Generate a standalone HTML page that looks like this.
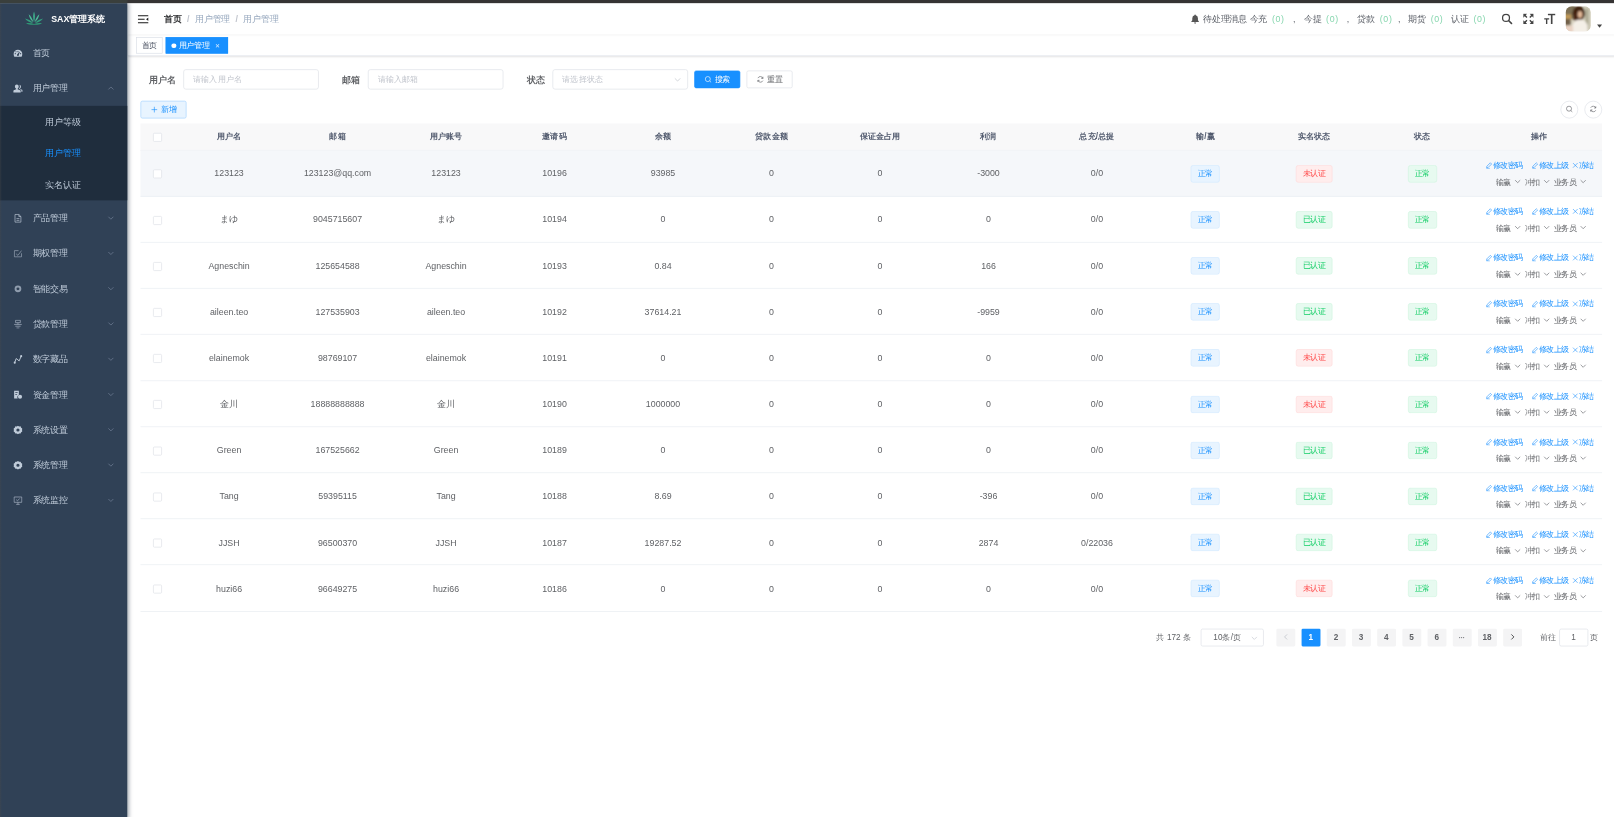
<!DOCTYPE html>
<html lang="zh">
<head>
<meta charset="utf-8">
<title>SAX管理系统</title>
<style>
*{box-sizing:border-box;margin:0;padding:0}
html,body{width:1614px;height:817px;overflow:hidden;background:#fff}
body{font-family:"Liberation Sans",sans-serif;font-size:14px;color:#606266;position:relative}
#root{position:absolute;left:0;top:0;width:2570px;height:1300px;transform:scale(0.63);transform-origin:0 0;overflow:hidden;background:#fff}
#strip{position:absolute;left:0;top:0;width:2570px;height:5px;background:linear-gradient(90deg,#3a3f3c 0,#3a3f3c 200px,#363434 204px,#363434 100%);z-index:50}
#ledge{position:absolute;left:0;top:5px;width:3px;height:1300px;background:linear-gradient(90deg,rgba(74,74,74,.38) 0,rgba(74,74,74,.18) 55%,rgba(74,74,74,0) 100%);z-index:49}
#app{position:absolute;left:2.5px;top:5px;width:2560px;height:1295px}
svg{display:inline-block;vertical-align:middle}
/* sidebar */
#side{position:absolute;left:-3px;top:0;width:202px;padding-left:2.300px;padding-top:.7px;height:100%;background:#304156;box-shadow:2px 0 6px rgba(0,21,41,.35);z-index:10}
.logo{height:50px;line-height:50px;text-align:center;white-space:nowrap;color:#fff;font-weight:700;font-size:14px}
.logo svg{width:34px;height:34px;margin-right:10px;margin-left:0;vertical-align:middle;position:relative;top:-1.500px}
.logo span{display:inline-block;vertical-align:middle;position:relative;top:-1.500px}
.mi{position:relative;height:56px;line-height:56px;padding-left:20px;color:#bfcbd9;font-size:14px;white-space:nowrap}
.mi svg.ic{width:15px;height:15px;margin-right:16px;margin-left:-1px;vertical-align:-3px;fill:currentColor}
.mi .arr{position:absolute;right:20px;top:50%;margin-top:-6px;width:12px;height:12px}
.sub{background:#1f2d3d;margin-left:-2.300px;padding-left:2.300px}
.sub .mi{height:50px;line-height:50px;padding-left:70px}
.sub .mi.on{color:#1890ff}
/* navbar */
#nav{position:absolute;left:200px;top:0;right:0;height:50px;background:#fff;box-shadow:0 1px 4px rgba(0,21,41,.08);z-index:5}
.ham{position:absolute;left:15px;top:15.500px;width:18.500px;height:19px}
.bc{position:absolute;left:58px;top:0;line-height:50px;font-size:14px;color:#97a8be;white-space:nowrap}
.bc b{color:#303133;font-weight:700}
.bc i{font-style:normal;font-weight:700;color:#c0c4cc;margin:0 8.500px}
.rm{position:absolute;right:0;top:0;height:50px;line-height:50px;white-space:nowrap}
.msg{position:absolute;top:0;height:50px;line-height:50px;font-size:14px;color:#5a5e66;white-space:nowrap}
.msg em{font-style:normal;color:#86d6ae;margin-left:7.500px;letter-spacing:1px}.msg i{display:inline-block;font-style:normal;text-align:center}
.nic{position:absolute;top:16px;width:18px;height:18px}
.ava{position:absolute;left:2282px;top:5px;width:40px;height:40px;border-radius:10px;overflow:hidden}
.caret{position:absolute;left:2332px;top:33.500px;width:0;height:0;border:4.5px solid transparent;border-top:5px solid #444;border-bottom:0}
/* tags */
#tags{position:absolute;left:200px;top:50px;right:0;height:34px;background:#fff;border-bottom:1px solid #dfe2e9;box-shadow:0 1px 3px 0 rgba(0,0,0,.10),0 0 3px 0 rgba(0,0,0,.04);z-index:4;white-space:nowrap;font-size:0}
.tag{display:inline-block;position:relative;height:26px;line-height:24px;border:1px solid #d8dce5;color:#495060;background:#fff;padding:0 8px;font-size:12px;margin-left:5px;margin-top:4px;vertical-align:top}
.tag:first-child{margin-left:13.500px}
.tag.on{background:#1890ff;color:#fff;border-color:#1890ff}
.tag.on:before{content:"";display:inline-block;width:7.500px;height:7.500px;border-radius:50%;background:#fff;margin-right:4.500px;position:relative;top:0}
.tag .x{display:inline-block;width:16px;text-align:center;font-size:10px;margin-left:4.500px;margin-right:.5px;color:#dcecff}
/* main */
#main{position:absolute;left:200px;top:85.100px;right:0;bottom:0;padding:20px;background:#fff}

.form{height:50px;white-space:nowrap;font-size:0}
.fi{display:inline-block;vertical-align:top;height:32px;line-height:32px;margin-right:10px;font-size:14px}
.fi label{display:inline-block;width:68px;text-align:right;padding-right:12px;font-weight:700;color:#606266;font-size:14px;vertical-align:top}
.inp{display:inline-block;vertical-align:top;width:215px;height:32px;line-height:30px;border:1px solid #dcdfe6;border-radius:4px;padding:0 15px;font-size:13px;color:#c0c4cc;background:#fff;position:relative}
.inp.sel svg{position:absolute;right:9px;top:9px;width:13px;height:13px}
.btn{display:inline-block;vertical-align:top;height:28px;line-height:26px;margin-top:2px;padding:0 15px;border:1px solid #dcdfe6;border-radius:3px;font-size:12px;color:#606266;background:#fff;margin-right:10px}
.btn.pri{background:#1890ff;border-color:#1890ff;color:#fff}
.btn.add{background:#e8f4ff;border-color:#a3d3ff;color:#1890ff;margin-top:0}
.bi{width:12px;height:12px;margin-right:5px;vertical-align:-1.5px}
.tb{position:relative;height:28px;margin-bottom:7.600px;font-size:0}
.cir{position:absolute;top:0;width:28px;height:28px;border:1px solid #dcdfe6;border-radius:50%;background:#fff;text-align:center;line-height:24px}
.cir svg{width:12px;height:12px}
.tbl{width:2320px;font-size:14px;color:#606266}
.tr{display:flex;height:73.200px;border-bottom:1px solid #e6ebf0;align-items:center}
.tr.hov{background:#f5f7fa}
.tr.th{height:43px;background:#f8f8f9;color:#515a6e;font-weight:700;font-size:13px}
.c{flex:1 1 0;text-align:center;white-space:nowrap;overflow:hidden;line-height:23px}
.c.ck{flex:0 0 55px}
.c.op{flex:0 0 198.500px}.tr .c{position:relative;top:.9px}.tr.th .c{top:.2px}
.cb{display:inline-block;width:14px;height:14px;border:1px solid #dcdfe6;border-radius:2px;background:#fff;vertical-align:middle}
.tg{display:inline-block;height:28px;line-height:26px;padding:0 10px;font-size:12px;border-radius:4px;border:1px solid}
.tg.b{background:#e8f4ff;border-color:#d1e9ff;color:#1890ff}
.tg.g{background:#e7faf0;border-color:#d0f5e0;color:#13ce66}
.tg.r{background:#ffeded;border-color:#ffdbdb;color:#ff4949}
.l1{height:26px;line-height:26px;font-size:0;color:#1890ff;white-space:nowrap;padding-left:2px}.l1 .tbn{font-size:12px}
.l1 .tbn{display:inline-block;margin-left:13.800px}.l1 .tbn:first-child{margin-left:0}.l1 .tbn:last-child{margin-left:5px}
.l1 .bi{margin-right:0;width:11px;height:11px}
.l2{height:26px;line-height:26px;font-size:0;color:#606266;white-space:nowrap;padding-left:7px}
.l2 span{display:inline-block;font-size:12px;margin-left:5.200px}.l2 span:first-child{margin-left:0}
.dn{width:12px;height:12px;margin-left:5px;vertical-align:-1.5px}
.pg{position:absolute;right:20px;top:906.100px;height:32px;padding:2px 5px;white-space:nowrap;font-size:0;color:#606266}
.pg>span{display:inline-block;vertical-align:top;height:28px;line-height:28px;font-size:13px}
.tot{margin-right:15px}
.psz{width:100px;border:1px solid #dcdfe6;border-radius:3px;line-height:26px!important;text-align:center;padding-right:15px;margin-right:15px;position:relative;color:#606266}
.psz svg{position:absolute;right:8px;top:8px;width:12px;height:12px}
.pb{min-width:30px;margin:0 5px;background:#f4f4f5;color:#606266;border-radius:2px;text-align:center;font-weight:700}
.pb.on{background:#1890ff;color:#fff}
.pb svg{width:12px;height:12px;vertical-align:-1px}
.dots{font-size:6px;letter-spacing:1px;vertical-align:2px;color:#606266}
.jmp{margin-left:24px;color:#606266}
.jin{display:inline-block;width:46px;height:28px;line-height:26px;border:1px solid #dcdfe6;border-radius:3px;margin:0 4px;text-align:center;vertical-align:top}

.logo span{width:84.800px;text-align:left;white-space:nowrap}
.bc b,.bc u{display:inline-block;text-decoration:none;white-space:nowrap;overflow:visible}
.bc b{width:28px}.bc u{width:56px}
.msg u{display:inline-block;text-decoration:none;white-space:nowrap}
.msg u.a{width:101.900px}.msg u.b{width:28px}
.tag{width:42px;padding:0 0 0 8px;overflow:visible;white-space:nowrap}
.tag.on{width:99px}
.btn{width:73px;padding:0;text-align:center;white-space:nowrap}
.tg{width:46px;padding:0;text-align:center;white-space:nowrap}
.tg.w3{width:58px}
.l1 .tbn{width:59px;text-align:left;white-space:nowrap}
.l1 .tbn:last-child{width:35px}
.l2 span{width:41px;text-align:left;white-space:nowrap}
.l2 span:last-child{width:53px}
.tot{width:54.920px;white-space:nowrap}
.jmp u{display:inline-block;text-decoration:none;white-space:nowrap;vertical-align:top}
.jmp u.a{width:26px}.jmp u.b{width:13px}
</style>
</head>
<body>
<div id="root">
<div id="strip"></div><div id="ledge"></div>
<div id="app">
<div id="side">
<div class="logo"><svg viewBox="0 0 32 32"><g fill="#3fae8c"><path d="M16 5c1.6 4.5 2 9 0 16-2-7-1.600-11.500 0-16z"/><path d="M8 9c3.500 3 5.500 6.500 7 12-4-3.500-6-7-7-12z" fill="#4dbd98"/><path d="M24 9c-3.500 3-5.500 6.500-7 12 4-3.500 6-7 7-12z" fill="#4dbd98"/><path d="M2.500 15.500c5 1 8.500 3 12 6.500-5-.5-9-2.500-12-6.500z" fill="#35a07f"/><path d="M29.500 15.500c-5 1-8.500 3-12 6.500 5-.5 9-2.500 12-6.500z" fill="#35a07f"/><path d="M4 22.500c4-.8 8-.5 12 1.200 4-1.700 8-2 12-1.200-4 2.200-8 2.800-12 2.200-4 .6-8 0-12-2.200z" fill="#2f9675"/></g></svg><span>SAX管理系统</span></div>
<div class="mi"><svg class="ic" viewBox="0 0 16 16"><path d="M8 2a7.500 7.500 0 0 0-7.500 7.500c0 1.600.5 3.100 1.300 4.300h12.400a7.600 7.600 0 0 0 1.300-4.300A7.500 7.500 0 0 0 8 2zm0 2.200a1 1 0 1 1 0 2 1 1 0 0 1 0-2zM3.500 9.700a1 1 0 1 1 0-2 1 1 0 0 1 0 2zm1.200-3.200a1 1 0 1 1 0-2 1 1 0 0 1 0 2zM8 12.500a1.600 1.600 0 0 1-.6-3.100l2.900-4 .7.400-1.500 4.600c.1.200.1.400.1.600A1.600 1.600 0 0 1 8 12.500zm4.500-2.800a1 1 0 1 1 0-2 1 1 0 0 1 0 2z"/></svg>首页</div>
<div class="mi"><svg class="ic" viewBox="0 0 16 16"><path d="M6 1.200a3.300 3.300 0 0 1 3.300 3.400c0 1.500-.8 3-1.900 3.600v.9l4.200 1.800c.6.300 1 .8 1 1.500v2.200H0v-2.200c0-.7.300-1.200 1-1.500l4-1.800v-.9C3.700 7.600 2.800 6.100 2.800 4.600A3.300 3.300 0 0 1 6 1.200z"/><path d="M10.300 1.800c1.600.1 2.800 1.400 2.800 3.100 0 1.300-.6 2.500-1.500 3.100v.7l3.500 1.500c.5.300.9.800.9 1.400v2h-2.300v-1.700c0-1-.6-1.900-1.600-2.300l-2.400-1v-.3c1-.9 1.600-2.300 1.600-3.700 0-1-.3-2-1-2.800z"/></svg>用户管理<svg class="arr" viewBox="0 0 12 12"><path d="M2 8l4-4 4 4" fill="none" stroke="#74839a" stroke-width="1.100"/></svg></div>
<div class="sub">
<div class="mi">用户等级</div>
<div class="mi on">用户管理</div>
<div class="mi">实名认证</div>
</div>
<div class="mi"><svg class="ic" viewBox="0 0 16 16"><path d="M3 1.500h6.500l3.500 3.500v9.500H3z M9.500 1.500v3.500h3.500 M5.500 8.500h5 M5.500 11.500h5" fill="none" stroke="currentColor" stroke-width="1.100"/></svg>产品管理<svg class="arr" viewBox="0 0 12 12"><path d="M2 4l4 4 4-4" fill="none" stroke="#74839a" stroke-width="1.100"/></svg></div>
<div class="mi"><svg class="ic" viewBox="0 0 16 16"><path d="M9 3H2v10.500h12V7.500 M5 8.500l3 2.500 6-8" fill="none" stroke="#a9b5c4" stroke-width="1"/></svg>期权管理<svg class="arr" viewBox="0 0 12 12"><path d="M2 4l4 4 4-4" fill="none" stroke="#74839a" stroke-width="1.100"/></svg></div>
<div class="mi"><svg class="ic" viewBox="0 0 16 16"><path d="M8 2.300a5.700 5.700 0 1 0 0 11.400 5.700 5.700 0 0 0 0-11.400zm0 3.200a2.500 2.500 0 1 1 0 5 2.500 2.500 0 0 1 0-5z" fill-rule="evenodd" fill="#8f9cad"/></svg>智能交易<svg class="arr" viewBox="0 0 12 12"><path d="M2 4l4 4 4-4" fill="none" stroke="#74839a" stroke-width="1.100"/></svg></div>
<div class="mi"><svg class="ic" viewBox="0 0 16 16"><path d="M4 1.500h8v4H4z M1.500 8.500h13 M8 5.500v3 M3.500 11.500h9 M5.500 14.500h5" fill="none" stroke="#aebaca" stroke-width="1.100"/></svg>贷款管理<svg class="arr" viewBox="0 0 12 12"><path d="M2 4l4 4 4-4" fill="none" stroke="#74839a" stroke-width="1.100"/></svg></div>
<div class="mi"><svg class="ic" viewBox="0 0 16 16"><path d="M2.500 13.500l2.500-7 5 4 3.500-8" fill="none" stroke="currentColor" stroke-width="1.600"/><circle cx="2.500" cy="13.500" r="1.800"/><circle cx="13.500" cy="2.500" r="1.800"/></svg>数字藏品<svg class="arr" viewBox="0 0 12 12"><path d="M2 4l4 4 4-4" fill="none" stroke="#74839a" stroke-width="1.100"/></svg></div>
<div class="mi"><svg class="ic" viewBox="0 0 16 16"><path d="M1.500 1.500h8v7a4.500 4.500 0 0 0-2 6h-6z M3.500 4h4v1.200h-4z M3.500 7h3v1.200h-3z" fill-rule="evenodd"/><circle cx="11.500" cy="11.500" r="3.500"/></svg>资金管理<svg class="arr" viewBox="0 0 12 12"><path d="M2 4l4 4 4-4" fill="none" stroke="#74839a" stroke-width="1.100"/></svg></div>
<div class="mi"><svg class="ic" viewBox="0 0 16 16"><path d="M8 .8l2 1.300 2.400-.2 1 2.200 2 1.300-.4 2.600.4 2.600-2 1.300-1 2.200-2.400-.2-2 1.300-2-1.300-2.400.2-1-2.200-2-1.300.4-2.600-.4-2.600 2-1.300 1-2.200 2.400.2zM8 5.300a2.700 2.700 0 1 0 0 5.400 2.700 2.700 0 0 0 0-5.400z" fill-rule="evenodd"/></svg>系统设置<svg class="arr" viewBox="0 0 12 12"><path d="M2 4l4 4 4-4" fill="none" stroke="#74839a" stroke-width="1.100"/></svg></div>
<div class="mi"><svg class="ic" viewBox="0 0 16 16"><path d="M8 .8l2 1.300 2.400-.2 1 2.200 2 1.300-.4 2.600.4 2.600-2 1.300-1 2.200-2.400-.2-2 1.300-2-1.300-2.400.2-1-2.200-2-1.300.4-2.600-.4-2.600 2-1.300 1-2.200 2.400.2zM8 5.300a2.700 2.700 0 1 0 0 5.400 2.700 2.700 0 0 0 0-5.400z" fill-rule="evenodd"/></svg>系统管理<svg class="arr" viewBox="0 0 12 12"><path d="M2 4l4 4 4-4" fill="none" stroke="#74839a" stroke-width="1.100"/></svg></div>
<div class="mi"><svg class="ic" viewBox="0 0 16 16"><path d="M1.500 2h13v9h-13z M5 14.500h6 M8 11v3.500 M5 6.500l2.200 2L11 4.500" fill="none" stroke="#aebaca" stroke-width="1.100"/></svg>系统监控<svg class="arr" viewBox="0 0 12 12"><path d="M2 4l4 4 4-4" fill="none" stroke="#74839a" stroke-width="1.100"/></svg></div>
</div>

<div id="nav">
<svg class="ham" viewBox="0 0 20 20"><path d="M1 3h18v2H1z M1 9h11.500v2H1z M1 15h18v2H1z M19 7v6l-4-3z" fill="#1a1a1a"/></svg>
<div class="bc"><b>首页</b><i>/</i><u>用户管理</u><i>/</i><u>用户管理</u></div>
<svg class="nic" style="left:1686px;top:17px;width:16px;height:16px" viewBox="0 0 16 16"><path d="M8 1a1 1 0 0 1 1 1v.4a4.500 4.500 0 0 1 3.500 4.400v3.200l1.500 2v1H2v-1l1.500-2V6.800A4.500 4.500 0 0 1 7 2.400V2a1 1 0 0 1 1-1z M6.300 13.800h3.400a1.700 1.700 0 0 1-3.400 0z" fill="#555"/></svg>
<div class="msg" style="left:1707px"><u class="a">待处理消息 今充</u><em>(0)</em><i style="width:30.400px">,</i><u class="b">今提</u><em>(0)</em><i style="width:29.600px">,</i><u class="b">贷款</u><em>(0)</em><i style="width:25.200px;padding-right:4px">,</i><u class="b">期货</u><em>(0)</em><i style="width:12.300px"></i><u class="b">认证</u><em>(0)</em></div>
<svg class="nic" style="left:2180px" viewBox="0 0 18 18"><circle cx="7.500" cy="7.500" r="5.500" fill="none" stroke="#444" stroke-width="2"/><path d="M11.500 11.500l5 5" stroke="#444" stroke-width="2.400" stroke-linecap="round"/></svg>
<svg class="nic" style="left:2214px" viewBox="0 0 18 18"><path d="M1 1h6L4.800 3.200l2.700 2.700-1.600 1.600-2.700-2.700L1 7z M17 1v6l-2.200-2.200-2.700 2.700-1.600-1.600 2.700-2.700L11 1z M1 17v-6l2.200 2.200 2.700-2.700 1.600 1.600-2.700 2.700L7 17z M17 17h-6l2.200-2.200-2.700-2.700 1.600-1.600 2.700 2.700L17 11z" fill="#444"/></svg>
<svg class="nic" style="left:2248px" viewBox="0 0 18 18"><path d="M6 1h12v2.400h-4.700V17h-2.600V3.400H6z M0 8h8v2H5.100v7H2.900v-7H0z" fill="#444"/></svg>
<div class="ava"><svg width="40" height="40" viewBox="0 0 40 40"><defs><filter id="bl" x="-20%" y="-20%" width="140%" height="140%"><feGaussianBlur stdDeviation="1.800"/></filter></defs><rect width="40" height="40" fill="#d6cfbd"/><g filter="url(#bl)"><rect x="-4" y="-4" width="19" height="24" fill="#7d6f54"/><rect x="-4" y="13" width="13" height="7" fill="#c19a58"/><rect x="-4" y="20" width="12" height="10" fill="#6f5f48"/><rect x="29" y="-4" width="15" height="50" fill="#cfcbb8"/><rect x="32" y="4" width="4" height="32" fill="#a5a18a"/><ellipse cx="21" cy="11" rx="10" ry="12" fill="#3f2010"/><ellipse cx="16" cy="17" rx="4" ry="6" fill="#4a2815"/><ellipse cx="23" cy="13" rx="3.800" ry="5.500" fill="#e2b898"/><path d="M11 44V30c2-6 6-9 12-9s10 3 12 9v14z" fill="#f4efe7"/><rect x="-4" y="31" width="16" height="13" fill="#ead3c4"/></g></svg></div>
<div class="caret"></div>
</div>

<div id="tags"><span class="tag">首页</span><span class="tag on">用户管理<span class="x">✕</span></span></div>

<div id="main">
<div class="form"><div class="fi"><label>用户名</label><span class="inp">请输入用户名</span></div><div class="fi"><label>邮箱</label><span class="inp">请输入邮箱</span></div><div class="fi"><label>状态</label><span class="inp sel">请选择状态<svg viewBox="0 0 12 12"><path d="M2 4l4 4 4-4" fill="none" stroke="#c0c4cc" stroke-width="1"/></svg></span></div><div class="fi"><span class="btn pri"><svg class="bi" viewBox="0 0 12 12"><circle cx="5.500" cy="5.500" r="4" fill="none" stroke="#fff" stroke-width="1"/><path d="M8.500 8.500l2.300 2.300" stroke="#fff" stroke-width="1"/></svg>搜索</span><span class="btn"><svg class="bi" viewBox="0 0 12 12"><path d="M10 4.500A4.300 4.300 0 0 0 2 4 M2 7.500A4.300 4.300 0 0 0 10 8 M10 1.800v2.700H7.300 M2 10.200V7.500h2.700" fill="none" stroke="#606266" stroke-width="1"/></svg>重置</span></div></div>
<div class="tb"><span class="btn add"><svg class="bi" viewBox="0 0 12 12"><path d="M6 1.500v9 M1.500 6h9" stroke="#1890ff" stroke-width="1" fill="none"/></svg>新增</span><span class="cir" style="right:38px"><svg viewBox="0 0 12 12"><circle cx="5.500" cy="5.500" r="4" fill="none" stroke="#606266" stroke-width="1"/><path d="M8.500 8.500l2.300 2.300" stroke="#606266" stroke-width="1"/></svg></span><span class="cir" style="right:0"><svg viewBox="0 0 12 12"><path d="M10 4.500A4.300 4.300 0 0 0 2 4 M2 7.500A4.300 4.300 0 0 0 10 8 M10 1.800v2.700H7.300 M2 10.200V7.500h2.700" fill="none" stroke="#606266" stroke-width="1"/></svg></span></div>
<div class="tbl">
<div class="tr th"><div class="c ck"><i class="cb"></i></div><div class="c">用户名</div><div class="c">邮箱</div><div class="c">用户账号</div><div class="c">邀请码</div><div class="c">余额</div><div class="c">贷款金额</div><div class="c">保证金占用</div><div class="c">利润</div><div class="c">总充/总提</div><div class="c">输/赢</div><div class="c">实名状态</div><div class="c">状态</div><div class="c op">操作</div></div>
<div class="tr hov"><div class="c ck"><i class="cb"></i></div><div class="c">123123</div><div class="c">123123@qq.com</div><div class="c">123123</div><div class="c">10196</div><div class="c">93985</div><div class="c">0</div><div class="c">0</div><div class="c">-3000</div><div class="c">0/0</div><div class="c"><span class="tg b">正常</span></div><div class="c"><span class="tg r w3">未认证</span></div><div class="c"><span class="tg g">正常</span></div><div class="c op"><div class="l1"><span class="tbn"><svg class="bi" viewBox="0 0 12 12"><path d="M8.300 1.500l2.200 2.200-6 6-2.700.500.500-2.700z M1.500 11.300h6" fill="none" stroke="currentColor" stroke-width="1"/></svg>修改密码</span><span class="tbn"><svg class="bi" viewBox="0 0 12 12"><path d="M8.300 1.500l2.200 2.200-6 6-2.700.500.500-2.700z M1.500 11.300h6" fill="none" stroke="currentColor" stroke-width="1"/></svg>修改上级</span><span class="tbn"><svg class="bi" viewBox="0 0 12 12"><path d="M2 2l8 8 M10 2l-8 8" fill="none" stroke="currentColor" stroke-width="1"/></svg>冻结</span></div><div class="l2"><span>输赢<svg class="dn" viewBox="0 0 12 12"><path d="M2 4l4 4 4-4" fill="none" stroke="#606266" stroke-width="1"/></svg></span><span>冲扣<svg class="dn" viewBox="0 0 12 12"><path d="M2 4l4 4 4-4" fill="none" stroke="#606266" stroke-width="1"/></svg></span><span>业务员<svg class="dn" viewBox="0 0 12 12"><path d="M2 4l4 4 4-4" fill="none" stroke="#606266" stroke-width="1"/></svg></span></div></div></div>
<div class="tr"><div class="c ck"><i class="cb"></i></div><div class="c">まゆ</div><div class="c">9045715607</div><div class="c">まゆ</div><div class="c">10194</div><div class="c">0</div><div class="c">0</div><div class="c">0</div><div class="c">0</div><div class="c">0/0</div><div class="c"><span class="tg b">正常</span></div><div class="c"><span class="tg g w3">已认证</span></div><div class="c"><span class="tg g">正常</span></div><div class="c op"><div class="l1"><span class="tbn"><svg class="bi" viewBox="0 0 12 12"><path d="M8.300 1.500l2.200 2.200-6 6-2.700.500.500-2.700z M1.500 11.300h6" fill="none" stroke="currentColor" stroke-width="1"/></svg>修改密码</span><span class="tbn"><svg class="bi" viewBox="0 0 12 12"><path d="M8.300 1.500l2.200 2.200-6 6-2.700.500.500-2.700z M1.500 11.300h6" fill="none" stroke="currentColor" stroke-width="1"/></svg>修改上级</span><span class="tbn"><svg class="bi" viewBox="0 0 12 12"><path d="M2 2l8 8 M10 2l-8 8" fill="none" stroke="currentColor" stroke-width="1"/></svg>冻结</span></div><div class="l2"><span>输赢<svg class="dn" viewBox="0 0 12 12"><path d="M2 4l4 4 4-4" fill="none" stroke="#606266" stroke-width="1"/></svg></span><span>冲扣<svg class="dn" viewBox="0 0 12 12"><path d="M2 4l4 4 4-4" fill="none" stroke="#606266" stroke-width="1"/></svg></span><span>业务员<svg class="dn" viewBox="0 0 12 12"><path d="M2 4l4 4 4-4" fill="none" stroke="#606266" stroke-width="1"/></svg></span></div></div></div>
<div class="tr"><div class="c ck"><i class="cb"></i></div><div class="c">Agneschin</div><div class="c">125654588</div><div class="c">Agneschin</div><div class="c">10193</div><div class="c">0.84</div><div class="c">0</div><div class="c">0</div><div class="c">166</div><div class="c">0/0</div><div class="c"><span class="tg b">正常</span></div><div class="c"><span class="tg g w3">已认证</span></div><div class="c"><span class="tg g">正常</span></div><div class="c op"><div class="l1"><span class="tbn"><svg class="bi" viewBox="0 0 12 12"><path d="M8.300 1.500l2.200 2.200-6 6-2.700.500.500-2.700z M1.500 11.300h6" fill="none" stroke="currentColor" stroke-width="1"/></svg>修改密码</span><span class="tbn"><svg class="bi" viewBox="0 0 12 12"><path d="M8.300 1.500l2.200 2.200-6 6-2.700.500.500-2.700z M1.500 11.300h6" fill="none" stroke="currentColor" stroke-width="1"/></svg>修改上级</span><span class="tbn"><svg class="bi" viewBox="0 0 12 12"><path d="M2 2l8 8 M10 2l-8 8" fill="none" stroke="currentColor" stroke-width="1"/></svg>冻结</span></div><div class="l2"><span>输赢<svg class="dn" viewBox="0 0 12 12"><path d="M2 4l4 4 4-4" fill="none" stroke="#606266" stroke-width="1"/></svg></span><span>冲扣<svg class="dn" viewBox="0 0 12 12"><path d="M2 4l4 4 4-4" fill="none" stroke="#606266" stroke-width="1"/></svg></span><span>业务员<svg class="dn" viewBox="0 0 12 12"><path d="M2 4l4 4 4-4" fill="none" stroke="#606266" stroke-width="1"/></svg></span></div></div></div>
<div class="tr"><div class="c ck"><i class="cb"></i></div><div class="c">aileen.teo</div><div class="c">127535903</div><div class="c">aileen.teo</div><div class="c">10192</div><div class="c">37614.21</div><div class="c">0</div><div class="c">0</div><div class="c">-9959</div><div class="c">0/0</div><div class="c"><span class="tg b">正常</span></div><div class="c"><span class="tg g w3">已认证</span></div><div class="c"><span class="tg g">正常</span></div><div class="c op"><div class="l1"><span class="tbn"><svg class="bi" viewBox="0 0 12 12"><path d="M8.300 1.500l2.200 2.200-6 6-2.700.500.500-2.700z M1.500 11.300h6" fill="none" stroke="currentColor" stroke-width="1"/></svg>修改密码</span><span class="tbn"><svg class="bi" viewBox="0 0 12 12"><path d="M8.300 1.500l2.200 2.200-6 6-2.700.500.500-2.700z M1.500 11.300h6" fill="none" stroke="currentColor" stroke-width="1"/></svg>修改上级</span><span class="tbn"><svg class="bi" viewBox="0 0 12 12"><path d="M2 2l8 8 M10 2l-8 8" fill="none" stroke="currentColor" stroke-width="1"/></svg>冻结</span></div><div class="l2"><span>输赢<svg class="dn" viewBox="0 0 12 12"><path d="M2 4l4 4 4-4" fill="none" stroke="#606266" stroke-width="1"/></svg></span><span>冲扣<svg class="dn" viewBox="0 0 12 12"><path d="M2 4l4 4 4-4" fill="none" stroke="#606266" stroke-width="1"/></svg></span><span>业务员<svg class="dn" viewBox="0 0 12 12"><path d="M2 4l4 4 4-4" fill="none" stroke="#606266" stroke-width="1"/></svg></span></div></div></div>
<div class="tr"><div class="c ck"><i class="cb"></i></div><div class="c">elainemok</div><div class="c">98769107</div><div class="c">elainemok</div><div class="c">10191</div><div class="c">0</div><div class="c">0</div><div class="c">0</div><div class="c">0</div><div class="c">0/0</div><div class="c"><span class="tg b">正常</span></div><div class="c"><span class="tg r w3">未认证</span></div><div class="c"><span class="tg g">正常</span></div><div class="c op"><div class="l1"><span class="tbn"><svg class="bi" viewBox="0 0 12 12"><path d="M8.300 1.500l2.200 2.200-6 6-2.700.500.500-2.700z M1.500 11.300h6" fill="none" stroke="currentColor" stroke-width="1"/></svg>修改密码</span><span class="tbn"><svg class="bi" viewBox="0 0 12 12"><path d="M8.300 1.500l2.200 2.200-6 6-2.700.500.500-2.700z M1.500 11.300h6" fill="none" stroke="currentColor" stroke-width="1"/></svg>修改上级</span><span class="tbn"><svg class="bi" viewBox="0 0 12 12"><path d="M2 2l8 8 M10 2l-8 8" fill="none" stroke="currentColor" stroke-width="1"/></svg>冻结</span></div><div class="l2"><span>输赢<svg class="dn" viewBox="0 0 12 12"><path d="M2 4l4 4 4-4" fill="none" stroke="#606266" stroke-width="1"/></svg></span><span>冲扣<svg class="dn" viewBox="0 0 12 12"><path d="M2 4l4 4 4-4" fill="none" stroke="#606266" stroke-width="1"/></svg></span><span>业务员<svg class="dn" viewBox="0 0 12 12"><path d="M2 4l4 4 4-4" fill="none" stroke="#606266" stroke-width="1"/></svg></span></div></div></div>
<div class="tr"><div class="c ck"><i class="cb"></i></div><div class="c">金川</div><div class="c">18888888888</div><div class="c">金川</div><div class="c">10190</div><div class="c">1000000</div><div class="c">0</div><div class="c">0</div><div class="c">0</div><div class="c">0/0</div><div class="c"><span class="tg b">正常</span></div><div class="c"><span class="tg r w3">未认证</span></div><div class="c"><span class="tg g">正常</span></div><div class="c op"><div class="l1"><span class="tbn"><svg class="bi" viewBox="0 0 12 12"><path d="M8.300 1.500l2.200 2.200-6 6-2.700.500.500-2.700z M1.500 11.300h6" fill="none" stroke="currentColor" stroke-width="1"/></svg>修改密码</span><span class="tbn"><svg class="bi" viewBox="0 0 12 12"><path d="M8.300 1.500l2.200 2.200-6 6-2.700.500.500-2.700z M1.500 11.300h6" fill="none" stroke="currentColor" stroke-width="1"/></svg>修改上级</span><span class="tbn"><svg class="bi" viewBox="0 0 12 12"><path d="M2 2l8 8 M10 2l-8 8" fill="none" stroke="currentColor" stroke-width="1"/></svg>冻结</span></div><div class="l2"><span>输赢<svg class="dn" viewBox="0 0 12 12"><path d="M2 4l4 4 4-4" fill="none" stroke="#606266" stroke-width="1"/></svg></span><span>冲扣<svg class="dn" viewBox="0 0 12 12"><path d="M2 4l4 4 4-4" fill="none" stroke="#606266" stroke-width="1"/></svg></span><span>业务员<svg class="dn" viewBox="0 0 12 12"><path d="M2 4l4 4 4-4" fill="none" stroke="#606266" stroke-width="1"/></svg></span></div></div></div>
<div class="tr"><div class="c ck"><i class="cb"></i></div><div class="c">Green</div><div class="c">167525662</div><div class="c">Green</div><div class="c">10189</div><div class="c">0</div><div class="c">0</div><div class="c">0</div><div class="c">0</div><div class="c">0/0</div><div class="c"><span class="tg b">正常</span></div><div class="c"><span class="tg g w3">已认证</span></div><div class="c"><span class="tg g">正常</span></div><div class="c op"><div class="l1"><span class="tbn"><svg class="bi" viewBox="0 0 12 12"><path d="M8.300 1.500l2.200 2.200-6 6-2.700.500.500-2.700z M1.500 11.300h6" fill="none" stroke="currentColor" stroke-width="1"/></svg>修改密码</span><span class="tbn"><svg class="bi" viewBox="0 0 12 12"><path d="M8.300 1.500l2.200 2.200-6 6-2.700.500.500-2.700z M1.500 11.300h6" fill="none" stroke="currentColor" stroke-width="1"/></svg>修改上级</span><span class="tbn"><svg class="bi" viewBox="0 0 12 12"><path d="M2 2l8 8 M10 2l-8 8" fill="none" stroke="currentColor" stroke-width="1"/></svg>冻结</span></div><div class="l2"><span>输赢<svg class="dn" viewBox="0 0 12 12"><path d="M2 4l4 4 4-4" fill="none" stroke="#606266" stroke-width="1"/></svg></span><span>冲扣<svg class="dn" viewBox="0 0 12 12"><path d="M2 4l4 4 4-4" fill="none" stroke="#606266" stroke-width="1"/></svg></span><span>业务员<svg class="dn" viewBox="0 0 12 12"><path d="M2 4l4 4 4-4" fill="none" stroke="#606266" stroke-width="1"/></svg></span></div></div></div>
<div class="tr"><div class="c ck"><i class="cb"></i></div><div class="c">Tang</div><div class="c">59395115</div><div class="c">Tang</div><div class="c">10188</div><div class="c">8.69</div><div class="c">0</div><div class="c">0</div><div class="c">-396</div><div class="c">0/0</div><div class="c"><span class="tg b">正常</span></div><div class="c"><span class="tg g w3">已认证</span></div><div class="c"><span class="tg g">正常</span></div><div class="c op"><div class="l1"><span class="tbn"><svg class="bi" viewBox="0 0 12 12"><path d="M8.300 1.500l2.200 2.200-6 6-2.700.500.500-2.700z M1.500 11.300h6" fill="none" stroke="currentColor" stroke-width="1"/></svg>修改密码</span><span class="tbn"><svg class="bi" viewBox="0 0 12 12"><path d="M8.300 1.500l2.200 2.200-6 6-2.700.500.500-2.700z M1.500 11.300h6" fill="none" stroke="currentColor" stroke-width="1"/></svg>修改上级</span><span class="tbn"><svg class="bi" viewBox="0 0 12 12"><path d="M2 2l8 8 M10 2l-8 8" fill="none" stroke="currentColor" stroke-width="1"/></svg>冻结</span></div><div class="l2"><span>输赢<svg class="dn" viewBox="0 0 12 12"><path d="M2 4l4 4 4-4" fill="none" stroke="#606266" stroke-width="1"/></svg></span><span>冲扣<svg class="dn" viewBox="0 0 12 12"><path d="M2 4l4 4 4-4" fill="none" stroke="#606266" stroke-width="1"/></svg></span><span>业务员<svg class="dn" viewBox="0 0 12 12"><path d="M2 4l4 4 4-4" fill="none" stroke="#606266" stroke-width="1"/></svg></span></div></div></div>
<div class="tr"><div class="c ck"><i class="cb"></i></div><div class="c">JJSH</div><div class="c">96500370</div><div class="c">JJSH</div><div class="c">10187</div><div class="c">19287.52</div><div class="c">0</div><div class="c">0</div><div class="c">2874</div><div class="c">0/22036</div><div class="c"><span class="tg b">正常</span></div><div class="c"><span class="tg g w3">已认证</span></div><div class="c"><span class="tg g">正常</span></div><div class="c op"><div class="l1"><span class="tbn"><svg class="bi" viewBox="0 0 12 12"><path d="M8.300 1.500l2.200 2.200-6 6-2.700.500.500-2.700z M1.500 11.300h6" fill="none" stroke="currentColor" stroke-width="1"/></svg>修改密码</span><span class="tbn"><svg class="bi" viewBox="0 0 12 12"><path d="M8.300 1.500l2.200 2.200-6 6-2.700.500.500-2.700z M1.500 11.300h6" fill="none" stroke="currentColor" stroke-width="1"/></svg>修改上级</span><span class="tbn"><svg class="bi" viewBox="0 0 12 12"><path d="M2 2l8 8 M10 2l-8 8" fill="none" stroke="currentColor" stroke-width="1"/></svg>冻结</span></div><div class="l2"><span>输赢<svg class="dn" viewBox="0 0 12 12"><path d="M2 4l4 4 4-4" fill="none" stroke="#606266" stroke-width="1"/></svg></span><span>冲扣<svg class="dn" viewBox="0 0 12 12"><path d="M2 4l4 4 4-4" fill="none" stroke="#606266" stroke-width="1"/></svg></span><span>业务员<svg class="dn" viewBox="0 0 12 12"><path d="M2 4l4 4 4-4" fill="none" stroke="#606266" stroke-width="1"/></svg></span></div></div></div>
<div class="tr"><div class="c ck"><i class="cb"></i></div><div class="c">huzi66</div><div class="c">96649275</div><div class="c">huzi66</div><div class="c">10186</div><div class="c">0</div><div class="c">0</div><div class="c">0</div><div class="c">0</div><div class="c">0/0</div><div class="c"><span class="tg b">正常</span></div><div class="c"><span class="tg r w3">未认证</span></div><div class="c"><span class="tg g">正常</span></div><div class="c op"><div class="l1"><span class="tbn"><svg class="bi" viewBox="0 0 12 12"><path d="M8.300 1.500l2.200 2.200-6 6-2.700.500.500-2.700z M1.500 11.300h6" fill="none" stroke="currentColor" stroke-width="1"/></svg>修改密码</span><span class="tbn"><svg class="bi" viewBox="0 0 12 12"><path d="M8.300 1.500l2.200 2.200-6 6-2.700.500.500-2.700z M1.500 11.300h6" fill="none" stroke="currentColor" stroke-width="1"/></svg>修改上级</span><span class="tbn"><svg class="bi" viewBox="0 0 12 12"><path d="M2 2l8 8 M10 2l-8 8" fill="none" stroke="currentColor" stroke-width="1"/></svg>冻结</span></div><div class="l2"><span>输赢<svg class="dn" viewBox="0 0 12 12"><path d="M2 4l4 4 4-4" fill="none" stroke="#606266" stroke-width="1"/></svg></span><span>冲扣<svg class="dn" viewBox="0 0 12 12"><path d="M2 4l4 4 4-4" fill="none" stroke="#606266" stroke-width="1"/></svg></span><span>业务员<svg class="dn" viewBox="0 0 12 12"><path d="M2 4l4 4 4-4" fill="none" stroke="#606266" stroke-width="1"/></svg></span></div></div></div>
</div>
<div class="pg"><span class="tot">共 172 条</span><span class="psz">10条/页<svg viewBox="0 0 12 12"><path d="M2 4l4 4 4-4" fill="none" stroke="#c0c4cc" stroke-width="1"/></svg></span><span class="pb dis"><svg viewBox="0 0 12 12"><path d="M8 2L4 6l4 4" fill="none" stroke="#c0c4cc" stroke-width="1.300"/></svg></span><span class="pb on">1</span><span class="pb">2</span><span class="pb">3</span><span class="pb">4</span><span class="pb">5</span><span class="pb">6</span><span class="pb"><b class="dots">•••</b></span><span class="pb">18</span><span class="pb"><svg viewBox="0 0 12 12"><path d="M4 2l4 4-4 4" fill="none" stroke="#303133" stroke-width="1.300"/></svg></span><span class="jmp"><u class="a">前往</u><span class="jin">1</span><u class="b">页</u></span></div>
</div>
</div>
</div>
</body>
</html>
